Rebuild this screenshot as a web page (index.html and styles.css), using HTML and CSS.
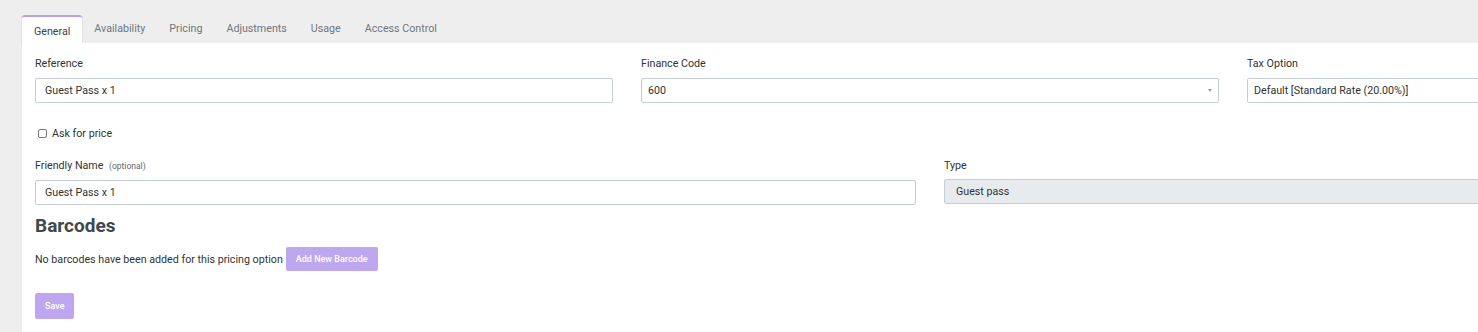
FILE: index.html
```html
<!DOCTYPE html>
<html lang="en">

<head>
    <meta charset="UTF-8">
    <title>Pricing Option</title>
    <link rel="stylesheet" href="styles.css">
</head>

<body>
    <div class="page">
        <ul class="tabs">
            <li class="tab active">General</li>
            <li class="tab">Availability</li>
            <li class="tab">Pricing</li>
            <li class="tab">Adjustments</li>
            <li class="tab">Usage</li>
            <li class="tab">Access Control</li>
        </ul>
        <div class="panel">
            <div class="row three">
                <div class="field">
                    <label>Reference</label>
                    <div class="input">Guest Pass x 1</div>
                </div>
                <div class="field">
                    <label>Finance Code</label>
                    <div class="input select">600<span class="caret"></span></div>
                </div>
                <div class="field">
                    <label>Tax Option</label>
                    <div class="input select">Default [Standard Rate (20.00%)]<span class="caret"></span></div>
                </div>
            </div>

            <div class="check">
                <span class="box"></span>
                <span>Ask for price</span>
            </div>

            <div class="row two">
                <div class="field">
                    <label>Friendly Name <small>(optional)</small></label>
                    <div class="input">Guest Pass x 1</div>
                </div>
                <div class="field">
                    <label>Type</label>
                    <div class="input disabled">Guest pass</div>
                </div>
            </div>

            <h2>Barcodes</h2>
            <div class="barcodes">
                <span>No barcodes have been added for this pricing option</span>
                <button class="btn small">Add New Barcode</button>
            </div>

            <button class="btn save">Save</button>
        </div>
    </div>
</body>

</html>
```

FILE: styles.css
```css
* {
    padding: 0;
    margin: 0;
    box-sizing: border-box;
}

body {
    background-color: #eeeeee;
    font-family: Roboto, "Liberation Sans", sans-serif;
    font-size: 10.7px;
    color: #333;
    overflow: hidden;
}

.page {
    width: 1816px;
    margin-left: 22px;
    padding-top: 15px;
}

/* tabs */
.tabs {
    list-style: none;
    display: flex;
    height: 28px;
}

.tab {
    padding: 0 12px;
    line-height: 28px;
    color: #6f777d;
}

.tab.active {
    background-color: #fff;
    color: #3d4347;
    border-top: 2px solid #b9a0ec;
    border-radius: 3px 3px 0 0;
    line-height: 27px;
    padding-top: 1px;
    box-shadow: -1px 0 0 #e2e2e2, 1px 0 0 #e2e2e2;
}

.panel {
    background-color: #fff;
    padding: 14px 13px 13px;
}

.row {
    display: grid;
    column-gap: 28px;
}

.row.three {
    grid-template-columns: repeat(3, 1fr);
}

.row.two {
    grid-template-columns: repeat(2, 1fr);
}

.field label {
    display: block;
    line-height: 13px;
    margin-bottom: 8px;
    color: #2f3336;
}

.row.two .field label {
    margin-bottom: 7px;
}

.field label small {
    font-size: 8.5px;
    color: #5f666b;
    margin-left: 3px;
}

.input {
    height: 25px;
    border: 1px solid #c5ced4;
    border-radius: 2px;
    padding: 0 9px;
    line-height: 23px;
    color: #2f3336;
    position: relative;
}

.input.select {
    padding-left: 6px;
}

.input.disabled {
    background-color: #e8ebee;
    padding-left: 11px;
}

.caret {
    position: absolute;
    right: 6px;
    top: 10px;
    border-left: 2px solid transparent;
    border-right: 2px solid transparent;
    border-top: 3px solid #999;
}

.check {
    display: flex;
    align-items: center;
    height: 14px;
    margin: 23px 0 19px 3px;
}

.check .box {
    width: 9px;
    height: 9px;
    border: 1px solid #777;
    border-radius: 2px;
    margin-right: 5px;
}

h2 {
    font-size: 19px;
    font-weight: 700;
    color: #42474b;
    line-height: 22px;
    margin-top: 10px;
}

.barcodes {
    display: flex;
    align-items: center;
    margin-top: 10px;
}

.btn {
    background-color: #bea7ee;
    border: none;
    border-radius: 2px;
    color: #fff;
    font-family: Roboto, "Liberation Sans", sans-serif;
    font-weight: 500;
    font-size: 9px;
}

.btn.small {
    height: 24px;
    padding: 0 10px;
    margin-left: 3px;
}

.btn.save {
    display: block;
    height: 26px;
    padding: 0 10px;
    margin-top: 22px;
}
```
